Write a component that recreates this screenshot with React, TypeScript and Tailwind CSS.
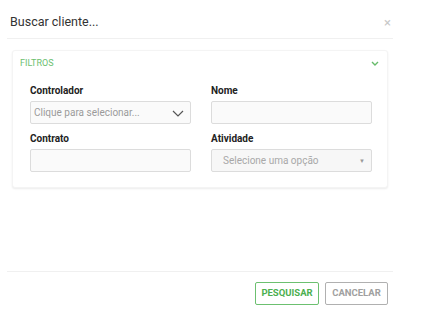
function Field({ label, children }: { label: string; children: React.ReactNode }) {
  return (
    <div className="flex flex-col">
      <label className="h-[16px] text-[10px] font-bold leading-[16px] text-[#222]">{label}</label>
      <div className="mt-[2px]">{children}</div>
    </div>
  );
}

export default function App() {
  return (
    <div className="min-h-screen bg-white" style={{ fontFamily: "Roboto, 'Liberation Sans', sans-serif" }}>
      <div className="w-[400px] px-[7px]">
        {/* header */}
        <div className="flex h-[39px] items-center justify-between border-b border-[#f0f0f0] pl-[3px] pr-[2px] pt-[6px]">
          <h2 className="text-[12.5px] text-[#333]">Buscar cliente...</h2>
          <span className="mt-[1px] text-[13px] leading-none text-[#c8c8c8]">×</span>
        </div>

        {/* filtros card */}
        <div className="mx-[5px] mt-[11px] h-[138px] rounded-[3px] border border-[#f4f4f4] bg-white shadow-[0_1px_2px_rgba(0,0,0,0.08)]">
          <div className="flex h-[24px] items-center justify-between pl-[7px] pr-[8px] pt-[1px]">
            <span className="mt-[1px] text-[9px] text-[#6cc070]">FILTROS</span>
            <svg width="8" height="5" viewBox="0 0 8 5">
              <polyline points="1,1 4,4 7,1" fill="none" stroke="#66bb6a" strokeWidth="1.4" />
            </svg>
          </div>
          <div className="mt-[8px] grid grid-cols-[161px_161px] gap-x-[20px] gap-y-[7px] pl-[17px]">
            <Field label="Controlador">
              <div className="flex h-[23px] items-center justify-between rounded-[2px] border border-[#dcdcdc] bg-[#fafafa] pl-[3px] pr-[6px]">
                <span className="text-[10px] text-[#9a9a9a]">Clique para selecionar...</span>
                <svg width="12" height="7" viewBox="0 0 12 7" className="mt-[2px]">
                  <polyline points="1,1 6,6 11,1" fill="none" stroke="#555" strokeWidth="1.2" />
                </svg>
              </div>
            </Field>
            <Field label="Nome">
              <div className="h-[23px] rounded-[2px] border border-[#dcdcdc] bg-[#fafafa]" />
            </Field>
            <Field label="Contrato">
              <div className="h-[23px] rounded-[2px] border border-[#dcdcdc] bg-[#fafafa]" />
            </Field>
            <Field label="Atividade">
              <div className="flex h-[23px] items-center justify-between rounded-[2px] border border-[#dcdcdc] bg-[#f7f7f7] pl-[11px] pr-[6px]">
                <span className="text-[10px] text-[#a8a8a8]">Selecione uma opção</span>
                <span className="text-[6px] text-[#999]">▼</span>
              </div>
            </Field>
          </div>
        </div>

        {/* footer */}
        <div className="mt-[83px] flex justify-end gap-[6px] border-t border-[#f0f0f0] pr-[5px] pt-[10px]">
          <button className="h-[23px] w-[64px] rounded-[2px] border-[1.5px] border-[#6cc070] text-[9.5px] font-bold text-[#4caf50]">
            PESQUISAR
          </button>
          <button className="h-[23px] w-[63px] rounded-[2px] border-[1.5px] border-[#b0b0b0] text-[9.5px] font-bold text-[#a0a0a0]">
            CANCELAR
          </button>
        </div>
      </div>
    </div>
  );
}
